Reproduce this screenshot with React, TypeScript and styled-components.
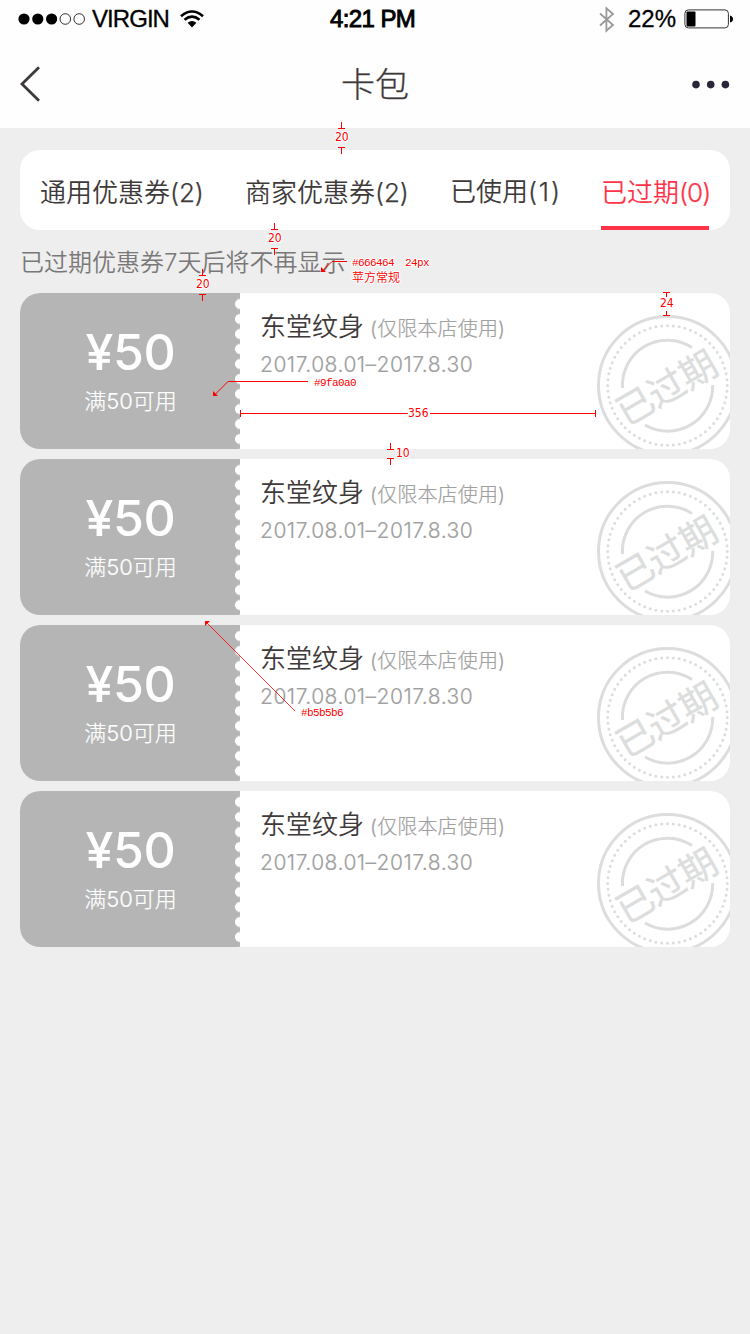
import React from 'react';
import styled, { createGlobalStyle } from 'styled-components';

const sans = '"Inter", "Noto Sans CJK SC", sans-serif';

const GlobalStyle = createGlobalStyle`
  * { box-sizing: border-box; }
  body { margin: 0; background: #eeeeee; }
  button { border: 0; padding: 0; background: none; font: inherit; color: inherit; }
`;

const Screen = styled.main`
  position: relative;
  width: 750px;
  height: 1334px;
  overflow: hidden;
  background: #eeeeee;
  font-family: ${sans};
  color: #3e3a39;
`;

const Header = styled.header`
  height: 128px;
  background: #fefefe;
`;

const StatusBar = styled.div`
  display: grid;
  grid-template-columns: 1fr auto 1fr;
  align-items: center;
  height: 38px;
  padding: 0 17px 0 18px;
  font-family: "Liberation Sans", sans-serif;
  font-size: 24px;
  line-height: 38px;
  color: #000;
`;

const StatusGroup = styled.div<{ $end?: boolean }>`
  display: flex;
  align-items: center;
  justify-content: ${(p) => (p.$end ? 'flex-end' : 'flex-start')};
`;

const StatusText = styled.span<{ $width: number; $weight?: number; $spacing?: number }>`
  width: ${(p) => p.$width}px;
  white-space: nowrap;
  -webkit-text-stroke: ${(p) => p.$weight ?? 0.3}px #000;
  letter-spacing: ${(p) => p.$spacing ?? 0}px;
`;

const NavBar = styled.nav`
  display: flex;
  align-items: center;
  justify-content: space-between;
  height: 92px;
  padding: 0 20px;
`;

const Title = styled.h1`
  margin: 0;
  padding-top: 2px;
  font-size: 34px;
  font-weight: 300;
  line-height: 90px;
  color: #3e3a39;
  -webkit-text-stroke: 0.3px currentColor;
`;

const IconButton = styled.button<{ $end?: boolean }>`
  display: flex;
  width: 44px;
  justify-content: ${(p) => (p.$end ? 'flex-end' : 'flex-start')};
`;

const Content = styled.section`
  padding: 22px 20px 0;
`;

const Tabs = styled.div`
  display: flex;
  justify-content: space-between;
  height: 80px;
  padding: 0 21px 0 20px;
  border-radius: 20px;
  background: #fff;
`;

const Tab = styled.button<{ $active?: boolean; $width: number; $line?: number }>`
  width: ${(p) => p.$width}px;
  height: 80px;
  font-size: 26px;
  font-weight: 350;
  line-height: ${(p) => p.$line ?? 77}px;
  padding-top: 4px;
  white-space: nowrap;
  text-align: left;
  color: ${(p) => (p.$active ? '#ff3448' : '#3e3a39')};
  border-bottom: 4px solid ${(p) => (p.$active ? '#ff3448' : 'transparent')};
`;

const Count = styled.span<{ $spacing: number }>`
  font-weight: 300;
  letter-spacing: ${(p) => p.$spacing}px;
  -webkit-text-stroke: 0.25px currentColor;
`;

const Notice = styled.p`
  margin: 0;
  height: 63px;
  font-size: 24px;
  font-weight: 350;
  line-height: 65px;
  color: #7a7878;
`;

const NoticeDigit = styled.span`
  font-weight: 300;
`;

const CouponList = styled.div`
  display: flex;
  flex-direction: column;
  gap: 10px;
`;

const Coupon = styled.article`
  display: flex;
  height: 156px;
  border-radius: 20px;
  overflow: hidden;
  background: #fff;
`;

const Value = styled.div`
  display: flex;
  flex-direction: column;
  align-items: center;
  width: 220px;
  padding: 31px 0 0 1px;
  color: #fff;
  background:
    linear-gradient(#b5b5b5, #b5b5b5) right top / 5px 4px no-repeat,
    radial-gradient(circle at 5px 7.5px, #fff 4.6px, #b5b5b5 5.4px) right 3.5px / 5px 15px repeat-y,
    #b5b5b5;
`;

const Amount = styled.strong`
  font-size: 50px;
  font-weight: 500;
  line-height: 56px;
  letter-spacing: -0.4px;
`;

const Condition = styled.span`
  font-size: 22px;
  font-weight: 300;
  line-height: 43px;
  -webkit-text-stroke: 0.2px currentColor;
`;

const Details = styled.div`
  flex: 1;
  padding: 15px 0 0 20px;
`;

const ShopLine = styled.div`
  display: flex;
  align-items: baseline;
  gap: 6px;
  height: 36px;
  line-height: 37px;
`;

const Shop = styled.span`
  font-size: 26px;
  font-weight: 350;
`;

const Limit = styled.span`
  font-size: 20px;
  font-weight: 300;
  letter-spacing: 0.15px;
  color: #9fa0a0;
  -webkit-text-stroke: 0.2px currentColor;
`;

const Dates = styled.div`
  font-size: 21px;
  font-weight: 300;
  line-height: 42px;
  letter-spacing: 0.5px;
  color: #9fa0a0;
  -webkit-text-stroke: 0.2px currentColor;
`;

const StampBox = styled.div`
  width: 134px;
  height: 156px;
  padding-top: 22px;
  overflow: hidden;
`;

const Overlay = styled.svg`
  position: absolute;
  inset: 0;
  pointer-events: none;
  .digits { font: 12px "DejaVu Sans Condensed", "DejaVu Sans", sans-serif; font-stretch: condensed; }
  .code { font: 11px "Liberation Mono", monospace; letter-spacing: -0.6px; }
  .cjk { font: 350 12px "Noto Sans CJK SC", sans-serif; }
`;

const Stamp = () => (
  <svg width="142" height="142" viewBox="0 0 142 142" fill="none" stroke="#dcdddd" strokeWidth="3">
    <circle cx="71.5" cy="70.5" r="69" />
    <circle cx="71.5" cy="70.5" r="59.8" strokeLinecap="round" pathLength="64" strokeDasharray="0 1" />
    <path d="M26.5 73A45 45 0 0 1 96 32.5" />
    <path d="M116.7 70A45 45 0 0 1 49 110" />
    <text x="69.2" y="85.5" transform="rotate(-30 71.5 70.5)" textAnchor="middle" fill="#dcdddd"
      strokeWidth="0.3" letterSpacing="-0.8" fontFamily="Noto Sans CJK SC" fontSize="37">已过期</text>
  </svg>
);

const coupons = [1, 2, 3, 4];

const Gap = ({ x, top, bottom, label, tx, ty }: { x: number; top: number; bottom: number; label: string; tx: number; ty: number }) => (
  <>
    <path d={`M${x - 3.5} ${top}.5h7M${x} ${top}v-6M${x - 3.5} ${bottom}.5h7M${x} ${bottom}v7`} />
    <Label x={tx} y={ty}>{label}</Label>
  </>
);

const Label = ({ x, y, kind = 'digits', children }: { x: number; y: number; kind?: string; children: string }) => (
  <text className={kind} x={x} y={y} fill="#f00" stroke="#fff" strokeWidth="2" paintOrder="stroke" xmlSpace="preserve">{children}</text>
);

const Annotations = () => (
  <Overlay width="750" height="1334" fill="none" stroke="#f00" strokeWidth="1">
    <Gap x={341.5} top={128} bottom={147} label="20" tx={335} ty={141} />
    <Gap x={274.5} top={229} bottom={248} label="20" tx={268} ty={242} />
    <Gap x={202.5} top={275} bottom={294} label="20" tx={196} ty={288} />
    <Gap x={390.5} top={449} bottom={458} label="10" tx={396} ty={457} />
    <path d="M663 292.5h7M666.5 293v4M663 315.5h7M666.5 315v-4" />
    <Label x={660} y={307}>24</Label>
    <path d="M347 261.5H332l-8 8" />
    <path d="M321 272v-5l5 5z" fill="#f00" stroke="none" />
    <Label x={352} y={266} kind="code">#666464</Label>
    <Label x={405} y={266} kind="code">24px</Label>
    <Label x={352} y={282} kind="cjk">苹方常规</Label>
    <path d="M308 381.5H228l-13 13" />
    <path d="M213 396v-5l5 5z" fill="#f00" stroke="none" />
    <Label x={314} y={386} kind="code">#9fa0a0</Label>
    <path d="M240.5 410v7M240 413.5h168M430 413.5h165M595.5 410v7" />
    <Label x={408} y={417}>356</Label>
    <path d="M207 623l88 88" strokeWidth="0.8" />
    <path d="M205 621h5l-5 5z" fill="#f00" stroke="none" />
    <Label x={301} y={716} kind="code">#b5b5b6</Label>
  </Overlay>
);

export default function App() {
  return (
    <Screen>
      <GlobalStyle />
      <Header>
        <StatusBar>
          <StatusGroup>
            <svg width="74" height="12" viewBox="0 0 74 12">
              <circle cx="6" cy="6" r="5.6" /><circle cx="19.8" cy="6" r="5.6" /><circle cx="33.6" cy="6" r="5.6" />
              <g fill="none" stroke="#000" strokeWidth=".8"><circle cx="47.3" cy="6" r="5.3" /><circle cx="61.2" cy="6" r="5.3" /></g>
            </svg>
            <StatusText $width={87} $spacing={-0.95}>VIRGIN</StatusText>
            <svg width="26" height="18" viewBox="0 0 26 18" fill="none" stroke="#000" strokeWidth="2.6">
              <path d="M2 6.2Q13-3.2 24 6.2M5.5 9.8Q13 3.6 20.5 9.8" />
              <path d="M8.6 12.8Q13 9 17.4 12.8L13 17.4z" fill="#000" stroke="none" />
            </svg>
          </StatusGroup>
          <StatusText $width={91} $weight={0.9} $spacing={-0.6}>4:21 PM</StatusText>
          <StatusGroup $end>
            <svg width="29" height="27" viewBox="0 0 29 27" fill="none" stroke="#999" strokeWidth="1.8">
              <path d="M1 7.5l13 11.5-6.6 5.8V2.2L14 8 1 19.5" />
            </svg>
            <StatusText $width={56}>22%</StatusText>
            <svg width="49" height="20" viewBox="0 0 49 20">
              <rect x=".9" y=".9" width="43.5" height="18" rx="3.5" fill="none" stroke="#333" />
              <rect x="2.5" y="2.5" width="9" height="15" rx="1" />
              <path d="M46 6.5q3 1 3 3.5t-3 3.5z" />
            </svg>
          </StatusGroup>
        </StatusBar>
        <NavBar>
          <IconButton aria-label="返回">
            <svg width="22" height="36" viewBox="0 0 22 36" fill="none" stroke="#3e3a39" strokeWidth="2.8"><path d="M19 1.2L2 18l17 16.8" /></svg>
          </IconButton>
          <Title>卡包</Title>
          <IconButton $end aria-label="更多">
            <svg width="38" height="10" viewBox="0 0 38 10" fill="#272736"><circle cx="4" cy="5.6" r="3.8" /><circle cx="18.7" cy="5.6" r="3.8" /><circle cx="33.4" cy="5.6" r="3.8" /></svg>
          </IconButton>
        </NavBar>
      </Header>
      <Content>
        <Tabs>
          <Tab $width={164}>通用优惠券<Count $spacing={-0.1}>(2)</Count></Tab>
          <Tab $width={164}>商家优惠券<Count $spacing={-0.1}>(2)</Count></Tab>
          <Tab $width={110} $line={75}>已使用<Count $spacing={1.8}>(1)</Count></Tab>
          <Tab $width={108} $active>已过期<Count $spacing={-1}>(0)</Count></Tab>
        </Tabs>
        <Notice>已过期优惠券<NoticeDigit>7</NoticeDigit>天后将不再显示</Notice>
        <CouponList>
          {coupons.map((id) => (
            <Coupon key={id}>
              <Value>
                <Amount>¥50</Amount>
                <Condition>满50可用</Condition>
              </Value>
              <Details>
                <ShopLine><Shop>东堂纹身</Shop><Limit>(仅限本店使用)</Limit></ShopLine>
                <Dates>2017.08.01–2017.8.30</Dates>
              </Details>
              <StampBox><Stamp /></StampBox>
            </Coupon>
          ))}
        </CouponList>
      </Content>
      <Annotations />
    </Screen>
  );
}
